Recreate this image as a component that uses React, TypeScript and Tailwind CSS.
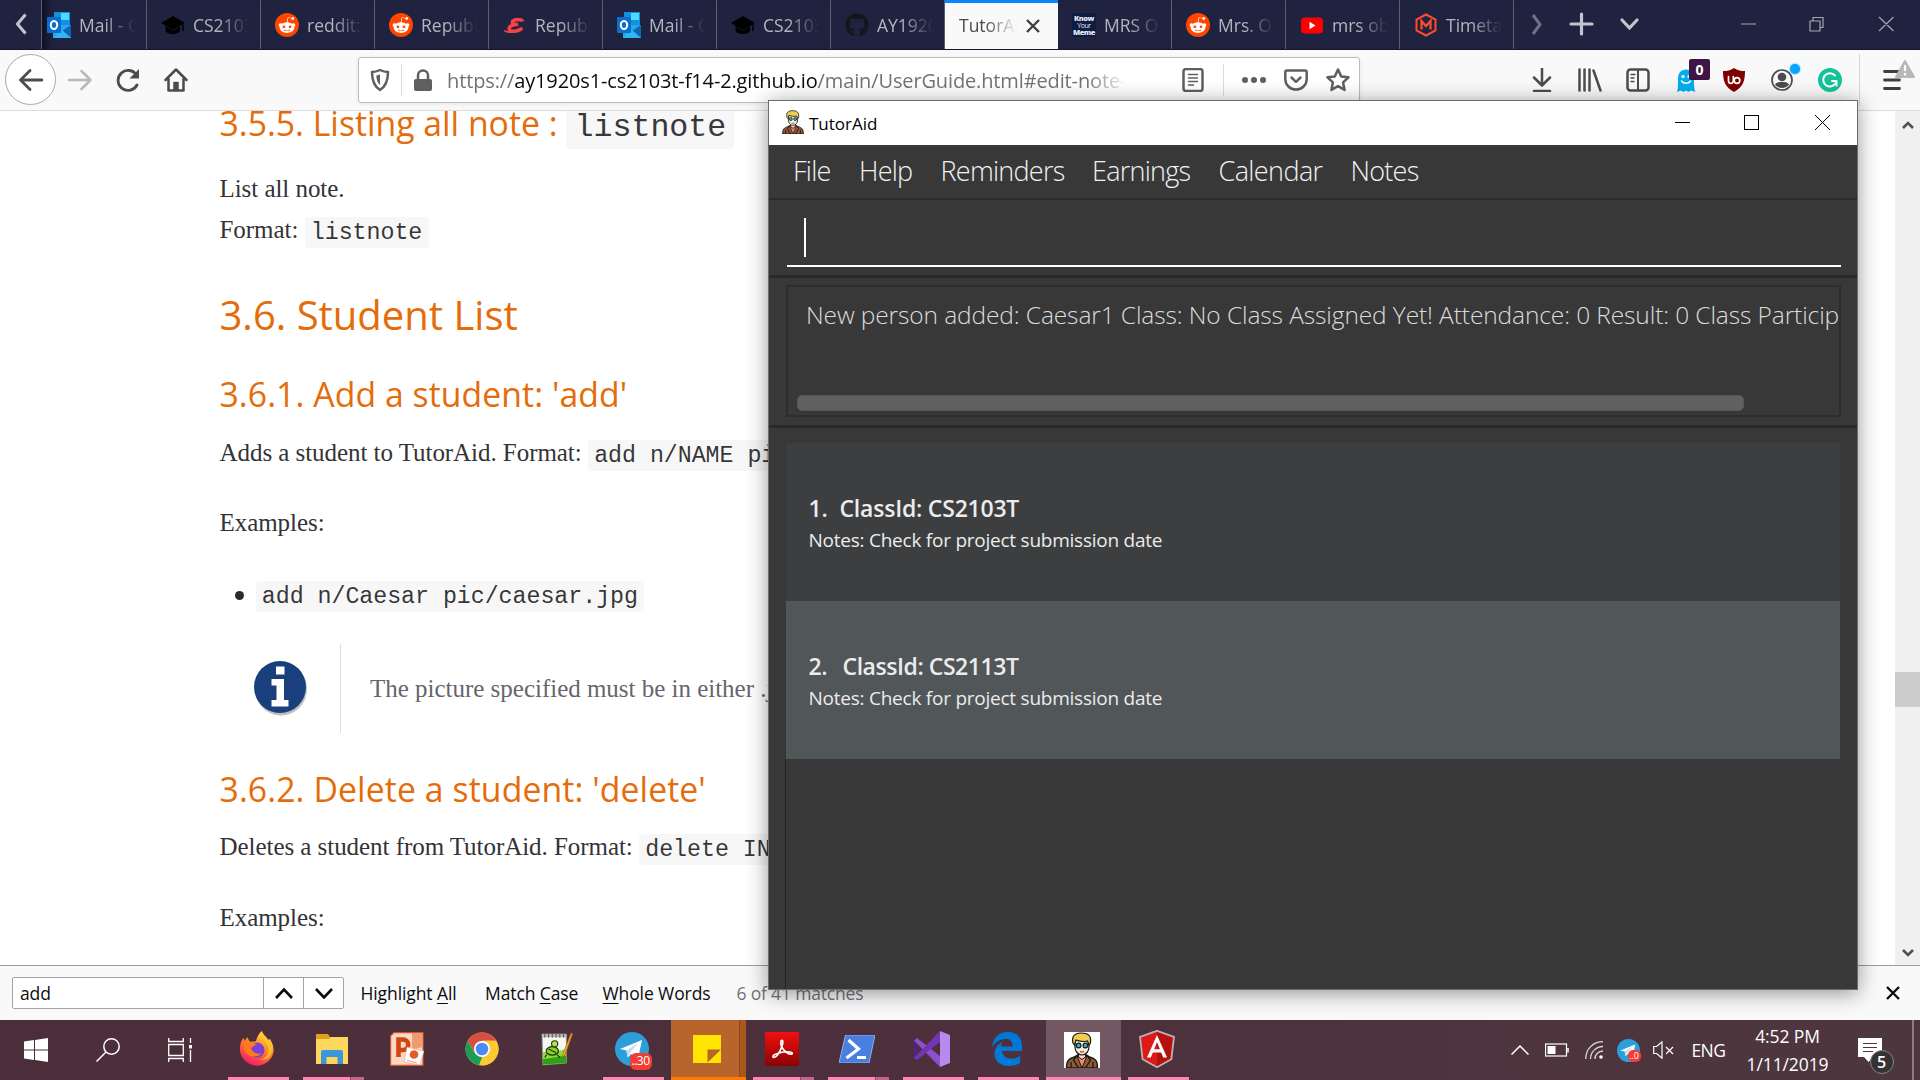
import type { ReactNode } from "react";
import { FaGithub, FaRedditAlien } from "react-icons/fa";

/* ---------- favicons ---------- */

const Outlook = () => (
  <svg viewBox="0 0 24 26" className="h-[26px] w-6">
    <rect x="7" y="0" width="16" height="14" fill="#1490df" />
    <rect x="14" y="1" width="8" height="7" fill="#50d9ff" />
    <path d="M6 13l18 0v13H6z" fill="#28a8ea" />
    <path d="M24 13l-9 6 9 7z" fill="#1066b5" />
    <path d="M6 26l9-8 9 8z" fill="#32b5f5" />
    <rect x="0" y="5" width="14" height="16" rx="1" fill="#0a6ed1" />
    <ellipse cx="7" cy="13" rx="3.2" ry="4" fill="none" stroke="#fff" strokeWidth="2" />
  </svg>
);
const Cap = () => (
  <svg viewBox="0 0 24 24" className="size-6" fill="#000">
    <path d="M12 3L24 10 12 17 0 10z" />
    <path d="M4.500 13v4.500c0 2 4 3.500 7.500 3.500s7-1.500 7-3.500V13.500L12 17.800z" />
    <path d="M21.500 11h1.200v7h-1.700z" />
  </svg>
);
const Reddit = () => (
  <div className="flex size-6 items-center justify-center rounded-full bg-[#ff4500]">
    <FaRedditAlien className="size-[18px] text-white" />
  </div>
);
const ScriptE = () => (
  <svg viewBox="0 0 24 24" className="size-6" fill="none" stroke="#fb4046" strokeLinecap="round">
    <path d="M18 7C14 5.500 8.500 7.500 9.500 10c.3 1.500 3 1.800 5.500 1.200C9 11.500 5 14 6.500 16.500c1 2.500 8 2.200 11.500-.5" strokeWidth="3.600" />
    <path d="M2 18c4 2 11 1.500 16-2M17 6.500l3.500 1" strokeWidth="1.800" />
  </svg>
);
const Github = () => <FaGithub className="size-6 text-[#15151c]" />;
const Meme = () => (
  <div className="flex size-6 flex-col items-center justify-center bg-[#0d1c42] font-['Open_Sans',sans-serif] text-[7.500px] leading-[7px] font-extrabold tracking-[-0.5px] text-[#e4e6ee]">
    <span>Know</span>
    <span className="text-[7px] font-normal">Your</span>
    <span>Meme</span>
  </div>
);
const Youtube = () => (
  <svg viewBox="0 0 24 24" className="size-6">
    <rect x="1" y="4.500" width="22" height="16" rx="4" fill="#f00" />
    <path d="M9.500 8.700v7.500l6-3.750z" fill="#fff" />
  </svg>
);
const HexM = () => (
  <svg viewBox="0 0 24 24" className="size-6" fill="none" stroke="#ff4a32" strokeWidth="2">
    <path d="M12 1.500l9.500 5.200v10.600L12 22.500l-9.500-5.200V6.700z" />
    <path d="M7.500 16.500V8l4.500 5 4.500-5v8.500" strokeWidth="2.300" />
  </svg>
);

const tabs: { icon?: () => ReactNode; title: string; active?: boolean }[] = [
  { icon: Outlook, title: "Mail - C" },
  { icon: Cap, title: "CS2103" },
  { icon: Reddit, title: "reddit:" },
  { icon: Reddit, title: "Republ" },
  { icon: ScriptE, title: "Republ" },
  { icon: Outlook, title: "Mail - C" },
  { icon: Cap, title: "CS2103" },
  { icon: Github, title: "AY1920" },
  { title: "TutorAid", active: true },
  { icon: Meme, title: "MRS O" },
  { icon: Reddit, title: "Mrs. O" },
  { icon: Youtube, title: "mrs ob" },
  { icon: HexM, title: "Timeta" },
];

function TabStrip() {
  return (
    <div className="flex h-[50px] shrink-0 border-b border-[#14152e] bg-[#202340] text-[17.5px] text-[#b4b5be]">
      <div className="flex w-[42px] items-center justify-center border-r border-[#5c5e74]">
        <svg viewBox="0 0 12 22" className="-mt-0.5 h-[22px] w-3" fill="none" stroke="#c3c4cc" strokeWidth="3">
          <path d="M10.500 1.500L2.500 11l8 9.500" />
        </svg>
      </div>
      <div className="flex w-[1473px] overflow-hidden shadow-[inset_12px_0_10px_-8px_#0c0d1c]">
        <div className="-ml-[9px] flex">
          {tabs.map((t, i) =>
            t.active ? (
              <div key={i} className="flex h-[50px] w-[113px] shrink-0 items-center justify-between border-t-[3px] border-[#0a84ff] bg-[#f9f9fa] pr-[18px] pl-[14px] text-[#4a4a4f]">
                <span className="-mt-[2px] w-[58px] overflow-hidden whitespace-nowrap [mask-image:linear-gradient(to_right,black_45%,transparent)]">{t.title}</span>
                <svg viewBox="0 0 14 14" className="-mt-px size-[14px]" stroke="#3c3c40" strokeWidth="2.300">
                  <path d="M1 1l12 12M13 1L1 13" />
                </svg>
              </div>
            ) : (
              <div key={i} className="flex h-[50px] w-[114px] shrink-0 items-center gap-2 border-r border-[#5c5e74] pl-[14px]">
                {t.icon && <t.icon />}
                <span className="w-[56px] overflow-hidden whitespace-nowrap [mask-image:linear-gradient(to_right,black_45%,transparent)]">{t.title}</span>
              </div>
            ),
          )}
        </div>
      </div>
      <div className="flex flex-1 items-center">
        <svg viewBox="0 0 405 50" className="h-[50px] w-[405px]" fill="none" stroke="#c3c4cc" strokeWidth="3">
          <path d="M18 15l7 9.500L18 34" stroke="#6f7186" />
          <path d="M66.500 14v20M56 24h21M107 20l7.500 8 7.500-8" strokeLinecap="round" strokeWidth="3.200" />
          <path d="M226 24h15M295 21h10v10h-10zM298 20.500v-3h10v10h-3M364 17l14.500 14M378.500 17L364 31" strokeWidth="1.200" stroke="#a6a7b2" />
        </svg>
      </div>
    </div>
  );
}

/* ---------- navigation bar ---------- */

function ToolIcon({ children, className = "" }: { children: ReactNode; className?: string }) {
  return (
    <svg viewBox="0 0 24 24" className={`size-6 shrink-0 ${className}`} fill="none" stroke="#4c4c4f" strokeWidth="2.500" strokeLinecap="round" strokeLinejoin="round">
      {children}
    </svg>
  );
}
const Cell = ({ children }: { children: ReactNode }) => <div className="relative flex w-12 shrink-0 items-center justify-center">{children}</div>;

function NavBar() {
  return (
    <div className="flex h-[61px] shrink-0 items-stretch border-b border-[#dcdcdd] bg-[#f9f9fa]">
      <div className="flex w-14 items-center pb-px pl-[5px]">
        <div className="flex size-[51px] items-center justify-center rounded-full border border-[#a9a9aa] bg-white">
          <ToolIcon>
            <path d="M23 12H2M11 2.500L1.500 12l9.500 9.500" strokeWidth="2.800" />
          </ToolIcon>
        </div>
      </div>
      <Cell>
        <ToolIcon>
          <path d="M1 12h21M13.500 3l9 9-9 9" stroke="#b9b9ba" />
        </ToolIcon>
      </Cell>
      <Cell>
        <ToolIcon>
          <path d="M20.500 7A10 10 0 1 0 21 17" strokeWidth="2.800" />
          <path d="M23 1v9.500h-9.500z" fill="#4c4c4f" stroke="none" />
        </ToolIcon>
      </Cell>
      <Cell>
        <ToolIcon>
          <path d="M1.500 12L12 1.500 22.500 12M4.500 11v11.500h15V11" />
          <path d="M10 22v-7.500h4V22" fill="#4c4c4f" strokeWidth="1.500" />
        </ToolIcon>
      </Cell>

      <div className="my-[7px] ml-[158px] flex w-[1002px] items-center rounded-[3px] border border-[#bcbcbd] bg-white shadow-[0_1px_4px_rgba(0,0,0,0.08)]">
        <ToolIcon className="ml-[9px]">
          <g stroke="#5f5f62">
            <path d="M12 2c3 1.500 5.500 2 8 2 0 8-1.500 14-8 18C5.500 18 4 12 4 4c2.500 0 5-.5 8-2z" />
            <path d="M12 6.500v10.500c-2.500-2-3.500-5-3.700-9.500z" fill="#5f5f62" stroke="none" />
          </g>
        </ToolIcon>
        <div className="ml-[9px] h-8 w-px bg-[#dcdcdd]" />
        <ToolIcon className="ml-[9px]">
          <rect x="3" y="11" width="18" height="12" rx="2" fill="#5f5f62" stroke="none" />
          <path d="M7 12V7.500a5 5 0 0 1 10 0V12" stroke="#5f5f62" />
        </ToolIcon>
        <div className="mt-px ml-3 w-[680px] overflow-hidden text-[20px] tracking-[-0.13px] whitespace-nowrap text-[#737376] [mask-image:linear-gradient(to_right,black_94%,transparent)]">
          https://<span className="text-[#0c0c0d]">ay1920s1-cs2103t-f14-2.github.io</span>/main/UserGuide.html#edit-note-
        </div>
        <ToolIcon className="ml-[54px]">
          <g stroke="#5f5f62">
            <rect x="2.500" y="1" width="19" height="22" rx="2.500" />
            <path d="M7.500 6.500h9M7.500 10h9M7.500 13.500h9M7.500 17h5" strokeWidth="1.600" />
          </g>
        </ToolIcon>
        <div className="ml-[18px] h-8 w-px bg-[#dcdcdd]" />
        <ToolIcon className="ml-[18px]">
          <g fill="#5f5f62" stroke="none">
            <circle cx="3" cy="12" r="3" />
            <circle cx="12" cy="12" r="3" />
            <circle cx="21" cy="12" r="3" />
          </g>
        </ToolIcon>
        <ToolIcon className="ml-[18px]">
          <path d="M3 2.500h18c1 0 1.700.7 1.700 1.700V11c0 6-4.700 10.500-10.700 10.500S1.300 17 1.300 11V4.200c0-1 .7-1.700 1.700-1.700zM7.500 9.500l4.500 4.300 4.500-4.300" stroke="#5f5f62" />
        </ToolIcon>
        <ToolIcon className="ml-[18px]">
          <path d="M12 1.500l3.200 6.900 7.300.9-5.400 5.100 1.500 7.500L12 18.200l-6.600 3.700 1.500-7.500L1.500 9.300l7.300-.9z" stroke="#5f5f62" />
        </ToolIcon>
      </div>

      <div className="ml-[158px] flex">
        <Cell>
          <ToolIcon>
            <path d="M12 0v16M4 9.500l8 8 8-8M4 23h16" />
          </ToolIcon>
        </Cell>
        <Cell>
          <ToolIcon>
            <path d="M1.500 1.500v21M6.500 1.500v21M11.500 1.500v21M15.500 2.500l7 20" />
          </ToolIcon>
        </Cell>
        <Cell>
          <ToolIcon>
            <rect x="1.500" y="1.500" width="21" height="21" rx="3" />
            <path d="M12 2v20" strokeWidth="2" />
            <path d="M5 6.500h4M5 10h3M5 13.500h3" strokeWidth="1.400" />
          </ToolIcon>
        </Cell>
        <Cell>
          <ToolIcon>
            <path d="M3 24c1-3 1-6 1-13C4 5 7 1.500 12 1.500S20 5 20 11c0 7 0 10 1.500 13l-4.500-1.500-2.500 1.500-2.500-1.500L9.500 24 7 22.500z" fill="#00aef0" stroke="none" />
            <circle cx="9" cy="8.500" r="1.600" fill="#fff" stroke="none" />
            <circle cx="15" cy="8.500" r="1.600" fill="#fff" stroke="none" />
            <path d="M7.500 13c2 3 7 3 9 0" stroke="#fff" strokeWidth="1.500" />
          </ToolIcon>
          <div className="absolute top-[9px] left-[27px] flex h-[21px] w-[21px] items-center justify-center rounded-[2px] bg-[#3f1545] text-[14px] font-bold text-white">0</div>
        </Cell>
        <Cell>
          <ToolIcon>
            <path d="M12 0c3.500 2.500 7 3 11 3 0 10-2 16-11 21C3 19 1 13 1 3c4 0 7.500-.5 11-3z" fill="#800000" stroke="none" />
            <path d="M6.500 8.500v4.500a2.400 2.400 0 0 0 4.800 0V8.500" stroke="#fff" strokeWidth="1.700" />
            <circle cx="15" cy="12.500" r="2.800" stroke="#fff" strokeWidth="1.700" />
          </ToolIcon>
        </Cell>
        <Cell>
          <ToolIcon>
            <circle cx="12" cy="12" r="10" strokeWidth="1.700" />
            <circle cx="12" cy="9" r="4.300" fill="#4c4c4f" stroke="none" />
            <path d="M5 16.500c2-2.500 4-2.500 7-2.500s5 0 7 2.500c-3 4.500-11 4.500-14 0z" fill="#4c4c4f" stroke="none" />
          </ToolIcon>
          <div className="absolute top-[14px] left-8 size-[10px] rounded-full bg-[#0aa5ff] shadow-[0_0_2px_#0aa5ff]" />
        </Cell>
        <Cell>
          <ToolIcon>
            <circle cx="12" cy="12" r="12" fill="#15c39a" stroke="none" />
            <path d="M17 7.500A6.700 6.700 0 1 0 18.500 13H14M18.500 13.500v4" stroke="#fff" strokeWidth="2" />
          </ToolIcon>
        </Cell>
      </div>
      <div className="my-1 ml-[5px] w-px bg-[#d5d5d7]" />
      <div className="relative ml-[23px] flex items-center">
        <svg viewBox="0 0 18 20" className="h-5 w-[18px]" stroke="#3f3f42" strokeWidth="2.800" strokeLinecap="round">
          <path d="M1.500 1.500h15M1.500 10h15M1.500 18.500h15" />
        </svg>
        <svg viewBox="0 0 20 18" className="absolute top-[10px] left-[12px] h-[18px] w-5">
          <path d="M10 1l9 16H1z" fill="#b8b8b9" stroke="#b8b8b9" strokeWidth="2" strokeLinejoin="round" />
          <path d="M10 5v6M10 13v2.500" stroke="#fff" strokeWidth="2.200" />
        </svg>
      </div>
    </div>
  );
}

/* ---------- documentation page ---------- */

const Code = ({ children }: { children: ReactNode }) => (
  <code className="rounded-[4px] bg-[#f7f7f8] px-[6.300px] py-[2.500px] font-['Liberation_Mono',monospace] text-[23.300px] text-black/80">{children}</code>
);
const H3 = ({ children, className }: { children: ReactNode; className: string }) => (
  <h3 className={`shrink-0 font-['Open_Sans',sans-serif] text-[33.750px] font-normal whitespace-pre text-[#e46c0a] ${className}`}>{children}</h3>
);
const P = ({ children, className = "" }: { children: ReactNode; className?: string }) => (
  <p className={`h-[41px] shrink-0 text-[25px] leading-[41px] tracking-[-0.050px] whitespace-pre ${className}`}>{children}</p>
);

function DocPage() {
  return (
    <div className="flex h-[854px] shrink-0 bg-white">
      <div className="flex flex-1 flex-col overflow-hidden pl-[219.500px] font-['Liberation_Serif',serif] text-[#333336]">
        <H3 className="-mt-[12px] h-12 leading-[48px]">
          3.5.5. Listing all note :{" "}
          <code className="rounded-[4px] bg-[#f7f7f8] px-[8.200px] py-[3px] font-['Liberation_Mono',monospace] text-[31.640px] text-[#38383b]">listnote</code>
        </H3>
        <P className="mt-[21px]">List all note.</P>
        <P>
          Format: <Code>listnote</Code>
        </P>
        <h2 className="mt-[40px] h-[50px] shrink-0 font-['Open_Sans',sans-serif] text-[40px] leading-[50px] text-[#e46c0a]">3.6. Student List</h2>
        <H3 className="mt-8 h-11 leading-[44px] tracking-[0.070px]">3.6.1. Add a student: 'add'</H3>
        <P className="mt-4">
          Adds a student to TutorAid. Format: <Code>add n/NAME pic/PICTURE</Code>
        </P>
        <P className="mt-[29px]">Examples:</P>
        <div className="mt-[30px] flex shrink-0 items-center">
          <span className="mt-[3px] ml-[15px] size-[9px] rounded-full bg-[#2b2b2e]" />
          <P className="ml-[12px]">
            <Code>add n/Caesar pic/caesar.jpg</Code>
          </P>
        </div>
        <div className="mt-[30px] flex h-[89px] shrink-0 items-center">
          <svg viewBox="0 0 60 60" className="-mt-1 ml-[30.500px] size-[60px]">
            <ellipse cx="31" cy="32" rx="26" ry="26.500" fill="#000" opacity="0.25" />
            <circle cx="30" cy="30" r="26" fill="#19407c" />
            <path d="M26 9.500h8.500v8H26zM21.500 22h12.500v21h4.500v6.500H21.500V43h5V28.500h-5z" fill="#fff" />
          </svg>
          <div className="ml-[30px] h-full w-px bg-[#dddddf]" />
          <span className="ml-[29px] text-[25px] tracking-[-0.015px] whitespace-nowrap text-[#66666a]">The picture specified must be in either .jpg or .png</span>
        </div>
        <H3 className="mt-[34px] h-11 leading-[44px] tracking-[0.100px]">3.6.2. Delete a student: 'delete'</H3>
        <P className="mt-[15px]">
          Deletes a student from TutorAid. Format: <Code>delete INDEX</Code>
        </P>
        <P className="mt-[30px]">Examples:</P>
      </div>
      <div className="flex w-[25px] flex-col items-center bg-[#f0f0f0]">
        <svg viewBox="0 0 12 8" className="mt-[10px] h-2 w-3" fill="none" stroke="#505052" strokeWidth="2.600">
          <path d="M1 7l5-5 5 5" />
        </svg>
        <div className="mt-[543px] h-[35px] w-[25px] bg-[#cdcdcd]" />
        <svg viewBox="0 0 12 8" className="mt-auto mb-[8px] h-2 w-3" fill="none" stroke="#505052" strokeWidth="2.600">
          <path d="M1 1l5 5 5-5" />
        </svg>
      </div>
    </div>
  );
}

function FindBar() {
  return (
    <div className="flex h-[55px] shrink-0 items-start border-t border-[#9c9c9e] bg-[#f9f9fa] pt-[11px] pl-3 text-[17.500px] tracking-[-0.100px] text-[#0c0c0d]">
      <div className="flex h-8 w-[332px] rounded-[2px] border border-[#a4a4a6] bg-white">
        <span className="w-[250px] pl-[7px] leading-[31px]">add</span>
        <span className="flex w-10 items-center justify-center border-l border-[#a4a4a6]">
          <svg viewBox="0 0 18 11" className="h-[11px] w-[18px]" fill="none" stroke="#0c0c0d" strokeWidth="2.600">
            <path d="M1 10l8-8.500 8 8.500" />
          </svg>
        </span>
        <span className="flex flex-1 items-center justify-center border-l border-[#a4a4a6]">
          <svg viewBox="0 0 18 11" className="h-[11px] w-[18px]" fill="none" stroke="#0c0c0d" strokeWidth="2.600">
            <path d="M1 1l8 8.500L17 1" />
          </svg>
        </span>
      </div>
      <div className="flex flex-1 pl-[16.500px] leading-[33px] whitespace-nowrap">
        <span className="w-[124.500px]">
          Highlight <span className="underline decoration-1 underline-offset-[3px]">A</span>ll
        </span>
        <span className="w-[117.500px]">
          Match <span className="underline decoration-1 underline-offset-[3px]">C</span>ase
        </span>
        <span className="w-[134px]">
          <span className="underline decoration-1 underline-offset-[3px]">W</span>hole Words
        </span>
        <span className="text-[#737376] tracking-[-0.180px]">6 of 41 matches</span>
      </div>
      <svg viewBox="0 0 14 14" className="mt-[9px] mr-5 size-[14px]" stroke="#0c0c0d" strokeWidth="2.400">
        <path d="M1 1l12 12M13 1L1 13" />
      </svg>
    </div>
  );
}

/* ---------- TutorAid window ---------- */

function Tutor({ className }: { className: string }) {
  return (
    <svg viewBox="0 0 36 36" className={className}>
      <path d="M2.500 36c0-7 2-9.500 8-11l3-2h9l3 2c6 1.500 8 4 8 11z" fill="#8f5a38" stroke="#1c1613" strokeWidth="1.400" />
      <path d="M13 24l5 12 5-12-5 3z" fill="#f08a78" stroke="#1c1613" strokeWidth="1" />
      <path d="M12.500 24l-3 4 5 8M23.500 24l3 4-5 8M7 30v6M29 30v6" fill="none" stroke="#1c1613" strokeWidth="1.300" />
      <path d="M14.500 19h7v6L18 27.500 14.500 25z" fill="#f3d9bd" stroke="#1c1613" strokeWidth="1" />
      <path d="M11 8h14v7c0 4-3 8-7 8s-7-4-7-8z" fill="#fbe8d3" stroke="#1c1613" strokeWidth="1.200" />
      <path d="M9 11C7.500 5 10 1 17 1c7 0 10.500 2.500 9.500 10L25 13l-1.500-4c-4 1-7.500.5-11.500-1l-1.500 5z" fill="#f0cc50" stroke="#1c1613" strokeWidth="1.200" />
      <circle cx="14.600" cy="13.500" r="2.300" fill="#39b3c4" stroke="#132127" strokeWidth="1.200" />
      <circle cx="21.400" cy="13.500" r="2.300" fill="#39b3c4" stroke="#132127" strokeWidth="1.200" />
      <path d="M16 19.500c1.300.8 2.700.8 4 0" stroke="#5d342a" fill="none" />
    </svg>
  );
}

const Note = ({ index, id, className, gap, title }: { index: string; id: string; className: string; gap: string; title: string }) => (
  <div className={`flex h-[158px] flex-col pt-[50px] pl-[22.500px] text-[#ececec] ${className}`}>
    <div className={`flex h-[31px] text-[23px] leading-[31px] font-semibold ${title}`}>
      <span className={gap}>{index}</span>
      <span>ClassId: {id}</span>
    </div>
    <div className="mt-[2px] text-[19px] leading-[28px] tracking-[-0.240px]">Notes: Check for project submission date</div>
  </div>
);

function TutorAidWindow() {
  return (
    <div className="absolute top-[100px] left-[768px] flex h-[890px] w-[1090px] flex-col border border-[#6b6b6b] bg-[#383838] shadow-[0_3px_20px_rgba(0,0,0,0.42)]">
      <div className="flex h-11 shrink-0 items-center bg-white pl-3">
        <Tutor className="-mt-0.5 size-6" />
        <span className="mt-px ml-[4px] flex-1 text-[17px] text-black">TutorAid</span>
        <div className="-mt-px flex">
          <span className="flex w-[65px] justify-center">
            <svg viewBox="0 0 15 15" className="size-[15px]" stroke="#000" fill="none">
              <path d="M0 7.500h15" />
            </svg>
          </span>
          <span className="flex w-[73px] justify-center">
            <svg viewBox="0 0 15 15" className="size-[15px]" stroke="#000" fill="none">
              <rect x=".5" y=".5" width="14" height="14" />
            </svg>
          </span>
          <span className="flex w-[69px] justify-center">
            <svg viewBox="0 0 15 15" className="size-[15px]" stroke="#000" fill="none">
              <path d="M0 0l15 15M15 0L0 15" />
            </svg>
          </span>
        </div>
      </div>

      <div className="flex h-[53px] shrink-0 pl-6 text-[27px] leading-[51px] font-light tracking-[-0.750px] text-[#f2f2f2]">
        <span className="w-[66px]">File</span>
        <span className="w-[81.500px]">Help</span>
        <span className="w-[151.500px]">Reminders</span>
        <span className="w-[126.500px]">Earnings</span>
        <span className="w-[132px] tracking-[-0.600px]">Calendar</span>
        <span>Notes</span>
      </div>

      <div className="flex h-[77px] shrink-0 flex-col border-t-2 border-[#2b2b2b] pt-[18px] pr-4 pl-[18px]">
        <div className="flex h-[49px] border-b-2 border-white pl-[17px]">
          <div className="h-[39px] w-[1.500px] bg-white" />
        </div>
      </div>

      <div className="flex h-[150px] shrink-0 flex-col border-t-[3px] border-[#292929] pt-[7px] pr-4 pl-[17px]">
        <div className="flex h-[132px] flex-col overflow-hidden border-2 border-[#2d2d2d]">
          <div className="h-[108px] pt-[11px] pl-[18px] text-[24.500px] leading-[34px] font-light tracking-[-0.110px] whitespace-nowrap text-[#dcdcdc]">
            New person added: Caesar1 Class: No Class Assigned Yet! Attendance: 0 Result: 0 Class Particip
          </div>
          <div className="ml-[9px] h-4 w-[947px] rounded-[5px] border border-[#585858] bg-[#606060]" />
        </div>
      </div>

      <div className="flex flex-1 flex-col border-t-[3px] border-[#292929] pt-[15px] pr-[17px] pl-4">
        <Note index="1." id="CS2103T" className="ml-px bg-[#3c3e3f]" gap="w-[31px]" title="tracking-[-0.220px]" />
        <Note index="2." id="CS2113T" className="ml-px bg-[#515658]" gap="w-[34px]" title="tracking-[-0.450px]" />
        <div className="flex-1 border-l border-[#232323]" />
      </div>
    </div>
  );
}

/* ---------- taskbar ---------- */

const Firefox = () => (
  <svg viewBox="0 0 36 36" className="size-9">
    <defs>
      <linearGradient id="ff" x1="0.8" y1="0" x2="0.3" y2="1">
        <stop offset="0" stopColor="#fff04a" />
        <stop offset="0.45" stopColor="#ff8a1e" />
        <stop offset="1" stopColor="#f5156c" />
      </linearGradient>
    </defs>
    <path d="M23 0c1 4 4 5 6 9l2-1c3 5 4 9 3.500 13A17 17 0 0 1 1 20C.5 14 2 10 4.500 7L6 10l2-4 3 5c3-1 4 0 6-1 1-4 3-8 6-10z" fill="url(#ff)" />
    <circle cx="18" cy="19" r="7.500" fill="#7a3fd6" />
    <path d="M5 11c4-2 9 0 13 3-3 0-4 2-6 3 2 5 6 7 11 5-5 6-15 4-18-3z" fill="#ff7a1c" />
    <path d="M23 2c0 5 5 8 6 13 2 8-3 13-8 14 8 1 13-5 12-13-.5-4-3-6-5-9z" fill="#ffc52e" opacity="0.8" />
  </svg>
);
const Explorer = () => (
  <svg viewBox="0 0 34 34" className="size-[34px]">
    <path d="M1 2h12l2 3h18v26H1z" fill="#dfa020" />
    <path d="M1 7h13l2-2h17v27H1z" fill="#fdd65c" />
    <path d="M6 32V20q0-2 2-2h18q2 0 2 2v12h-5.500v-7h-11v7z" fill="#3a96dd" />
  </svg>
);
const Powerpoint = () => (
  <svg viewBox="0 0 34 34" className="size-[34px]">
    <path d="M4 .6h29v32.800H.6V4z" fill="#fbd9c4" stroke="#d5532c" strokeWidth="1.200" />
    <path d="M22 1h10.500v14L22 18z" fill="#ef9b70" />
    <path d="M8.500 25V7.500h4.500a5 5 0 0 1 0 10.500H9" fill="none" stroke="#d2470f" strokeWidth="4.600" />
    <path d="M17 15l17 4-4 14-16-3z" fill="#fff" stroke="#e9a07d" strokeWidth=".6" />
    <circle cx="24" cy="22.500" r="4.300" fill="#e65a2c" />
    <path d="M17 28.500l10 2.500" stroke="#e9a07d" />
  </svg>
);
const Chrome = () => (
  <svg viewBox="0 0 34 34" className="size-[34px]">
    <circle cx="17" cy="17" r="16.500" fill="#fcc934" />
    <path d="M2.700 8.700A16.500 16.500 0 0 1 31.300 8.700H17L10 21z" fill="#d84f42" />
    <path d="M2.700 8.700L9.900 21.200 17 25.200l-3 8.100A16.500 16.500 0 0 1 2.700 8.700z" fill="#1d9c57" />
    <path d="M24.200 21L17 33.500A16.500 16.500 0 0 0 31.300 8.700H17z" fill="#fcc934" />
    <circle cx="17" cy="17" r="8" fill="#fff" />
    <circle cx="17" cy="17" r="6.300" fill="#4a8af4" />
  </svg>
);
const Notepad = () => (
  <svg viewBox="0 0 34 36" className="h-[34px] w-8">
    <path d="M1 2h26v31L2 35z" fill="#f4f6f0" stroke="#7d8a7a" strokeWidth=".8" />
    <path d="M2 21c8 1 16-1 24.600-3v15L2 34.500z" fill="#8bdc3c" />
    <path d="M2 29l24.600-4v8L2 34.500z" fill="#2fa01a" />
    <path d="M2 2h25v3.500H2z" fill="#b5b5b5" />
    <path d="M4 2v4M8 2v4M12 2v4M16 2v4M20 2v4M24 2v4" stroke="#444" strokeWidth=".9" />
    <ellipse cx="12" cy="20" rx="6.500" ry="4.500" fill="#8ed321" stroke="#1d3a12" strokeWidth="1.300" />
    <circle cx="14.500" cy="12.500" r="3.300" fill="#b5e356" stroke="#1d3a12" strokeWidth="1.200" />
    <path d="M6 24l-2 3M17 24l3 3M8 18l8 4" stroke="#1d3a12" strokeWidth="1.300" />
    <path d="M32 1l1.500 1-8 22-3 3 1-4z" fill="#f4b52a" stroke="#a8641b" strokeWidth=".8" />
  </svg>
);
const Telegram = ({ className }: { className: string }) => (
  <svg viewBox="0 0 34 34" className={className}>
    <circle cx="17" cy="17" r="17" fill="#2a9fda" />
    <path d="M5 17L27 8l-4 19-7-5-3.500 3.500-1-7z" fill="#fff" />
    <path d="M11.500 18.500L23 11l-8 10-2.500 4z" fill="#c6dcea" />
  </svg>
);
const Sticky = () => (
  <svg viewBox="0 0 28 28" className="size-7">
    <path d="M0 0h28v28H0z" fill="#ffe500" />
    <path d="M14.500 14.500H28L14.500 27.500z" fill="#b8642d" />
  </svg>
);
const Acrobat = () => (
  <svg viewBox="0 0 34 34" className="size-[34px]">
    <defs>
      <linearGradient id="ac" x1="0" y1="0" x2="0" y2="1">
        <stop offset="0" stopColor="#f40f0f" />
        <stop offset="1" stopColor="#8a0202" />
      </linearGradient>
    </defs>
    <rect width="34" height="34" rx="1" fill="url(#ac)" />
    <path d="M8 25c-1-3 11-6 17-5 5 1 1 4-4 0-4-3-6-8-5-11 1-2 3 0 1 5-2 6-6 13-9 11z" fill="none" stroke="#fff" strokeWidth="1.700" />
  </svg>
);
const Powershell = () => (
  <svg viewBox="0 0 36 28" className="h-7 w-9">
    <path d="M6.500 0H36l-6 28H0z" fill="#4a7fe0" stroke="#8fb0ee" strokeWidth="1" />
    <path d="M9.500 5l10 9-12 9M18 22.500h9" fill="none" stroke="#fff" strokeWidth="3.200" />
  </svg>
);
const VisualStudio = () => (
  <svg viewBox="0 0 36 36" className="size-9">
    <path d="M0 9l3-2v22l-3-2z" fill="#52218a" />
    <path d="M3 7L26 25v11L0 9.500z" fill="#8b50d0" />
    <path d="M0 27L26 0v11L3 29z" fill="#7236b5" />
    <path d="M26 0l10 4v28l-10 4z" fill="#b78af0" />
  </svg>
);
const Edge = () => (
  <svg viewBox="0 0 32 34" className="h-[34px] w-8">
    <path d="M1 15C2 6 8 0 17 0c9 0 14 6 14 14v5H11c.5 5 5 7.500 9 7.500 4 0 7-1 9-2.500v7c-3 2-7 3-11 3C9 34 3.500 29 3.500 22c0-6 3.500-10 8-12-1 1.500-1.500 3-1.500 4.500h11.500c0-5-2-7.500-6-7.500C10 7 4.500 9.500 1 15z" fill="#0078d7" />
  </svg>
);
const Angular = () => (
  <svg viewBox="0 0 36 38" className="h-[38px] w-9">
    <path d="M18 .8l17 6-2.600 22.500L18 37.200 3.600 29.300 1 6.800z" fill="#dd1b16" stroke="#b3b3b3" strokeWidth="1.800" />
    <path d="M18 2v34l13-7.500L33.500 8z" fill="#b3120f" />
    <path d="M18 5L8 27.500h3.800l2-5h8.400l2 5H28zM18 12l2.900 7.200h-5.800z" fill="#fff" fillRule="evenodd" />
  </svg>
);

function Task({ icon, open, stacked }: { icon: ReactNode; open?: boolean; stacked?: boolean }) {
  return (
    <div className="flex w-[75px] shrink-0 flex-col items-center">
      <div className="flex h-[57px] items-center justify-center pr-[3px]">{icon}</div>
      {open && (
        <div className="flex h-[3px] w-[61px]">
          <div className="flex-1 bg-[#ff85b3]" />
          {stacked && <div className="w-[14px] border-l border-[#8e4a67] bg-[#c4648c]" />}
        </div>
      )}
    </div>
  );
}

function Taskbar() {
  return (
    <div className="flex h-[60px] shrink-0 bg-linear-to-r from-[#4c2e3b] via-[#4d303c] to-[#4d373f]">
      <div className="flex w-[220.500px] text-white">
        <div className="flex w-[72px] items-center justify-center">
          <svg viewBox="0 0 24 24" className="size-6" fill="#fff">
            <path d="M0 3.400L10 2v9.500H0zM11 1.900L24 0v11.500H11zM0 12.500h10V22L0 20.600zM11 12.500h13V24l-13-1.900z" />
          </svg>
        </div>
        <div className="flex w-[72px] items-center justify-center">
          <svg viewBox="0 0 24 24" className="size-6" fill="none" stroke="#fff" strokeWidth="1.500">
            <circle cx="15.500" cy="8.500" r="7.700" />
            <path d="M10 14L.5 23.500" />
          </svg>
        </div>
        <div className="flex w-[72px] items-center justify-center">
          <svg viewBox="0 0 24 24" className="size-6" fill="none" stroke="#fff" strokeWidth="1.300">
            <path d="M.7 0v3.500h14.600V0M.7 24v-3.500h14.600V24M.7 6.500h14.600v11H.7zM22.500 0v5M22.500 12v12" />
            <path d="M21 7h3v3.500h-3z" fill="#fff" stroke="none" />
          </svg>
        </div>
      </div>
      <Task icon={<Firefox />} open />
      <Task icon={<Explorer />} open stacked />
      <Task icon={<Powerpoint />} />
      <Task icon={<Chrome />} />
      <Task icon={<Notepad />} />
      <Task
        open
        icon={
          <div className="relative">
            <Telegram className="size-[34px]" />
            <span className="absolute top-[21px] left-[15px] flex h-[17px] w-[22px] items-center justify-center rounded-[6px] bg-[#f23c34] text-[12px] tracking-[-0.500px] text-white">..30</span>
          </div>
        }
      />
      <div className="flex w-[75px] shrink-0 flex-col bg-[#b8642d]">
        <div className="flex h-[57px] items-center justify-between pl-[22px]">
          <Sticky />
          <div className="h-full w-[7px] border-l border-[#8f4717] bg-[#a9561f]" />
        </div>
        <div className="h-[3px] bg-[#ff7a00]" />
      </div>
      <Task icon={<Acrobat />} open stacked />
      <Task icon={<Powershell />} open stacked />
      <Task icon={<VisualStudio />} open />
      <Task icon={<Edge />} open />
      <div className="flex w-[75px] shrink-0 flex-col items-center bg-[#735863]">
        <div className="flex h-[57px] items-center pr-[2px]">
          <Tutor className="mt-[2px] size-9 bg-white" />
        </div>
        <div className="h-[3px] w-full bg-[#ff85b3]" />
      </div>
      <Task icon={<Angular />} open />

      <div className="flex flex-1 items-center pl-[315.500px] text-[17.500px] tracking-[-0.100px] whitespace-nowrap text-white">
        <svg viewBox="0 0 18 10" className="h-[10px] w-[18px]" fill="none" stroke="#fff" strokeWidth="1.500">
          <path d="M.5 9.500L9 1l8.500 8.500" />
        </svg>
        <svg viewBox="0 0 24 14" className="ml-4 h-[14px] w-6" fill="none" stroke="#fff">
          <rect x=".5" y="1" width="21" height="12" strokeWidth="1.200" />
          <rect x="2.500" y="3" width="8" height="8" fill="#fff" stroke="none" />
          <path d="M23 5v4.500" strokeWidth="1.500" />
        </svg>
        <svg viewBox="0 0 18 18" className="ml-[15.500px] size-[18px]" fill="none" stroke="#fff" strokeWidth="1.300">
          <path d="M.7 18C.7 8 8 .7 18 .7M5.500 18C5.500 11 11 5.500 18 5.500M10 18c0-4.500 3.500-8 8-8" opacity=".8" />
          <circle cx="16" cy="16" r="1.800" fill="#fff" stroke="none" />
        </svg>
        <div className="relative ml-[14px]">
          <Telegram className="size-[23px]" />
          <span className="absolute top-[11px] left-[11px] flex h-3 w-[13px] items-center justify-center rounded-[5px] bg-[#f23c34] text-[9px]">..0</span>
        </div>
        <svg viewBox="0 0 21 18" className="ml-[13px] h-[18px] w-[21px]" fill="none" stroke="#fff" strokeWidth="1.200">
          <path d="M.7 5.500h3L9 .8v16.400L3.700 12.500h-3zM13 6l7 7M20 6l-7 7" />
        </svg>
        <span className="ml-[18px] w-[33px] tracking-[-0.600px]">ENG</span>
        <div className="ml-[21px] flex w-[84px] flex-col items-center leading-[28px]">
          <span>4:52 PM</span>
          <span>1/11/2019</span>
        </div>
        <div className="relative ml-7">
          <svg viewBox="0 0 24 24" className="size-6">
            <path d="M0 0h24v19h-9l-4.500 5-4.500-5H0z" fill="#fff" />
            <path d="M5 5.500h14M5 9.500h14M5 13.500h10" stroke="#4d373f" strokeWidth="1.200" />
          </svg>
          <span className="absolute top-[12px] left-[12px] flex size-6 items-center justify-center rounded-full border border-[#8b8486] bg-[#353233] text-[16px] font-semibold">5</span>
        </div>
        <div className="ml-[30px] h-full w-[2px] bg-[#8d7c82]" />
      </div>
    </div>
  );
}

export default function App() {
  return (
    <div className="relative flex h-[1080px] w-[1920px] flex-col overflow-hidden bg-white font-['Open_Sans',sans-serif]">
      <TabStrip />
      <NavBar />
      <DocPage />
      <FindBar />
      <TutorAidWindow />
      <div className="relative">
        <Taskbar />
      </div>
    </div>
  );
}
